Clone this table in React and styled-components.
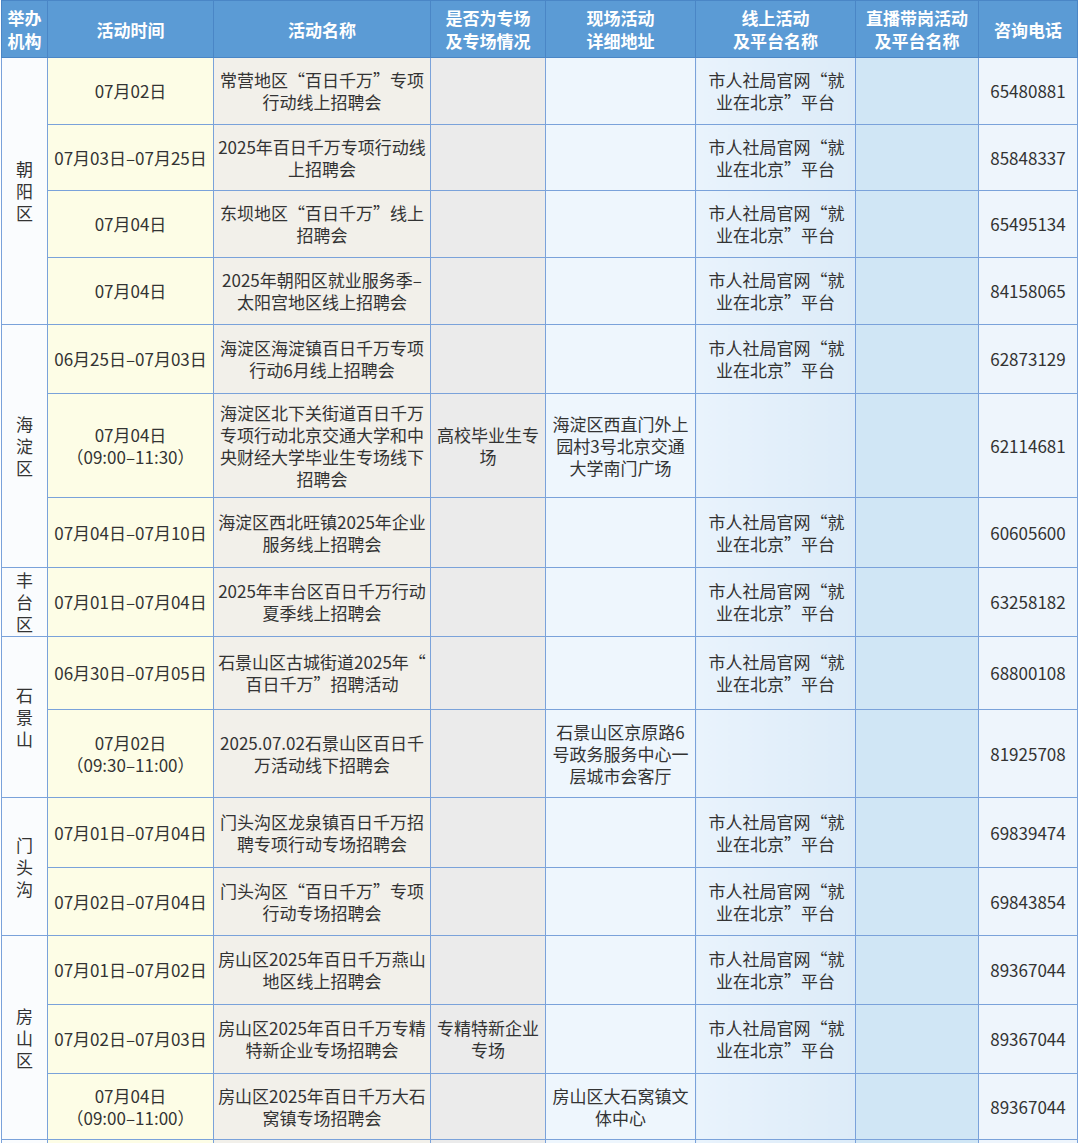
import React from 'react';
import styled, { createGlobalStyle, css } from 'styled-components';

const GlobalStyle = createGlobalStyle`
  body {
    margin: 0;
    background: #ffffff;
    font-family: "Noto Sans CJK SC", "Noto Sans", sans-serif;
    color: #333;
  }
`;

// column tints, left to right
const tints = [
  '#fafcfe',
  '#fdfde6',
  '#f2f0ea',
  '#ebebeb',
  '#eef6fd',
  'linear-gradient(90deg, #e9f3fc, #dcebf8)',
  '#d0e6f5',
  '#eef5fc',
];

const widths = [46, 166, 217, 115, 150, 160, 123, 99];

const Table = styled.table`
  border-collapse: collapse;
  table-layout: fixed;
  width: 1076px;
  margin-left: 1px;
`;

const HeadCell = styled.th`
  background: #5b9bd5;
  color: #fff;
  font-weight: 700;
  font-size: 17px;
  line-height: 23px;
  border: 1px solid #4a86c6;
  height: 56px;
  padding: 0;
  text-align: center;
  vertical-align: middle;
`;

const Row = styled.tr`
  height: ${p => p.$h}px;
`;

const Cell = styled.td`
  background: ${p => tints[p.$col]};
  border: 1px solid #7aa2da;
  padding: 0;
  text-align: center;
  vertical-align: middle;
  font-size: 17px;
  line-height: 22px;
  color: #333;
`;

const Line = styled.span`
  display: block;
  white-space: nowrap;
  ${p => p.$stretch && css`
    width: ${p.$stretch}px;
    margin: 0 auto;
    text-align-last: justify;
  `}
`;

const Lines = ({ items }) =>
  items.map((t, i) => <Line key={i}>{t}</Line>);

const online = (
  <>
    <Line $stretch={134}>市人社局官网“就</Line>
    <Line>业在北京”平台</Line>
  </>
);

const headers = [
  ['举办', '机构'],
  ['活动时间'],
  ['活动名称'],
  ['是否为专场', '及专场情况'],
  ['现场活动', '详细地址'],
  ['线上活动', '及平台名称'],
  ['直播带岗活动', '及平台名称'],
  ['咨询电话'],
];

const rows = [
  { d: '朝阳区', span: 4, h: 67, date: ['07月02日'], name: ['常营地区“百日千万”专项', '行动线上招聘会'], phone: '65480881' },
  { h: 66, date: ['07月03日–07月25日'], name: ['2025年百日千万专项行动线', '上招聘会'], phone: '85848337' },
  { h: 67, date: ['07月04日'], name: ['东坝地区“百日千万”线上', '招聘会'], phone: '65495134' },
  { h: 67, date: ['07月04日'], name: ['2025年朝阳区就业服务季–', '太阳宫地区线上招聘会'], phone: '84158065' },
  { d: '海淀区', span: 3, h: 69, date: ['06月25日–07月03日'], name: ['海淀区海淀镇百日千万专项', '行动6月线上招聘会'], phone: '62873129' },
  {
    h: 104, date: ['07月04日', '（09:00–11:30）'],
    name: ['海淀区北下关街道百日千万', '专项行动北京交通大学和中', '央财经大学毕业生专场线下', '招聘会'],
    special: ['高校毕业生专', '场'], addr: ['海淀区西直门外上', '园村3号北京交通', '大学南门广场'], phone: '62114681',
  },
  { h: 70, date: ['07月04日–07月10日'], name: ['海淀区西北旺镇2025年企业', '服务线上招聘会'], phone: '60605600' },
  { d: '丰台区', span: 1, h: 69, date: ['07月01日–07月04日'], name: ['2025年丰台区百日千万行动', '夏季线上招聘会'], phone: '63258182' },
  { d: '石景山', span: 2, h: 73, date: ['06月30日–07月05日'], name: ['石景山区古城街道2025年“', '百日千万”招聘活动'], phone: '68800108' },
  {
    h: 88, date: ['07月02日', '（09:30–11:00）'], name: ['2025.07.02石景山区百日千', '万活动线下招聘会'],
    addr: ['石景山区京原路6', '号政务服务中心一', '层城市会客厅'], phone: '81925708',
  },
  { d: '门头沟', span: 2, h: 70, date: ['07月01日–07月04日'], name: ['门头沟区龙泉镇百日千万招', '聘专项行动专场招聘会'], phone: '69839474' },
  { h: 68, date: ['07月02日–07月04日'], name: ['门头沟区“百日千万”专项', '行动专场招聘会'], phone: '69843854' },
  { d: '房山区', span: 3, h: 69, date: ['07月01日–07月02日'], name: ['房山区2025年百日千万燕山', '地区线上招聘会'], phone: '89367044' },
  {
    h: 69, date: ['07月02日–07月03日'], name: ['房山区2025年百日千万专精', '特新企业专场招聘会'],
    special: ['专精特新企业', '专场'], phone: '89367044',
  },
  {
    h: 66, date: ['07月04日', '（09:00–11:00）'], name: ['房山区2025年百日千万大石', '窝镇专场招聘会'],
    addr: ['房山区大石窝镇文', '体中心'], phone: '89367044',
  },
];

export default function App() {
  return (
    <>
      <GlobalStyle />
      <Table lang="zh-CN">
        <colgroup>
          {widths.map((w, i) => <col key={i} style={{ width: w }} />)}
        </colgroup>
        <thead>
          <tr>
            {headers.map((h, i) => (
              <HeadCell key={i}><Lines items={h} /></HeadCell>
            ))}
          </tr>
        </thead>
        <tbody>
          {rows.map((r, i) => (
            <Row key={i} $h={r.h}>
              {r.d && (
                <Cell $col={0} rowSpan={r.span}>
                  <Lines items={r.d.split('')} />
                </Cell>
              )}
              <Cell $col={1}><Lines items={r.date} /></Cell>
              <Cell $col={2}><Lines items={r.name} /></Cell>
              <Cell $col={3}>{r.special && <Lines items={r.special} />}</Cell>
              <Cell $col={4}>{r.addr && <Lines items={r.addr} />}</Cell>
              <Cell $col={5}>{!r.addr && online}</Cell>
              <Cell $col={6} />
              <Cell $col={7}>{r.phone}</Cell>
            </Row>
          ))}
          <Row $h={40}>
            {widths.map((w, i) => <Cell key={i} $col={i} />)}
          </Row>
        </tbody>
      </Table>
    </>
  );
}
